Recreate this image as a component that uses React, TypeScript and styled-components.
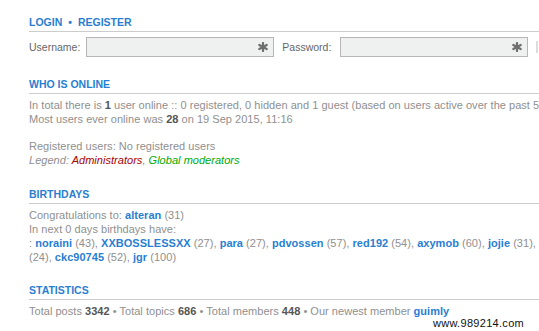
import * as React from 'react'
import styled, { createGlobalStyle } from 'styled-components'

const GlobalStyle = createGlobalStyle`
    html, body {
        margin: 0;
        padding: 0;
        background: #ffffff;
        overflow: hidden;
    }
    body {
        font-family: "Liberation Sans", Arial, sans-serif;
        font-size: 11px;
        color: #8f8f8f;
    }
`

const Page = styled.div`
    position: relative;
    width: 539px;
    height: 331px;
    overflow: hidden;
    padding: 15px 0 0 29px;
    box-sizing: border-box;
`

const Section = styled.section`
    width: 600px;
    margin-bottom: ${(p: { gap?: number }) => p.gap ?? 20}px;
`

const Heading = styled.h3`
    margin: 0;
    padding: 0 0 2px;
    font-size: 10.5px;
    line-height: 14px;
    font-weight: bold;
    text-transform: uppercase;
    color: #2a7ed2;
    border-bottom: 1px solid #cccccc;
`

const HeadLink = styled.a`
    color: inherit;
    text-decoration: none;
`

const Bullet = styled.span`
    margin: 0 6px;
`

const Body = styled.div`
    margin-top: 4px;
`

const Para = styled.p`
    margin: 0 0 13px;
    line-height: 14px;
    white-space: nowrap;
    letter-spacing: 0.03px;

    &:last-child {
        margin-bottom: 0;
    }
`

const Strong = styled.strong`
    color: #555555;
`

const User = styled.a`
    color: #2a7ed2;
    font-weight: bold;
    text-decoration: none;
`

const Group = styled.a`
    color: ${(p: { tint: string }) => p.tint};
    text-decoration: none;
`

const LoginRow = styled.div`
    display: flex;
    align-items: center;
    margin-top: 5px;
    height: 20px;
`

const Label = styled.label`
    font-size: 10.5px;
    color: #666666;
    margin-right: ${(p: { space: number }) => p.space}px;
    white-space: nowrap;
`

const Field = styled.div`
    position: relative;
    flex: none;
    width: 188px;
    height: 20px;
    box-sizing: border-box;
    border: 1px solid #b6b6b6;
    background: #eff0f0;
    margin-right: 8px;

    svg {
        position: absolute;
        right: 5px;
        top: 4px;
    }
`

const Stub = styled.div`
    flex: none;
    width: 20px;
    height: 12px;
    border-left: 2px solid #dddddd;
`

const Watermark = styled.div`
    position: absolute;
    left: 433px;
    top: 317px;
    font-size: 11px;
    color: #111111;
    letter-spacing: 0.3px;
`

const Star = () => (
    <svg width="10" height="10" viewBox="0 0 10 10">
        <g stroke="#6f6f6f" strokeWidth="2.2" strokeLinecap="round">
            <line x1="5" y1="1" x2="5" y2="9" />
            <line x1="1.3" y1="3" x2="8.7" y2="7" />
            <line x1="1.3" y1="7" x2="8.7" y2="3" />
        </g>
    </svg>
)

const birthdays: [string, number][] = [
    ['noraini', 43],
    ['XXBOSSLESSXX', 27],
    ['para', 27],
    ['pdvossen', 57],
    ['red192', 54],
    ['axymob', 60],
    ['jojie', 31],
]

export default function App() {
    return <>
        <GlobalStyle />
        <Page>
            <Section gap={20}>
                <Heading>
                    <HeadLink href="#">Login</HeadLink>
                    <Bullet>•</Bullet>
                    <HeadLink href="#">Register</HeadLink>
                </Heading>
                <LoginRow>
                    <Label space={6}>Username:</Label>
                    <Field><Star /></Field>
                    <Label space={9}>Password:</Label>
                    <Field><Star /></Field>
                    <Stub />
                </LoginRow>
            </Section>

            <Section>
                <Heading>Who is online</Heading>
                <Body>
                    <Para>
                        In total there is <Strong>1</Strong> user online :: 0 registered, 0 hidden and 1 guest (based on users active over the past 5 minutes)<br />
                        Most users ever online was <Strong>28</Strong> on 19 Sep 2015, 11:16
                    </Para>
                    <Para>
                        Registered users: No registered users<br />
                        <em>Legend: <Group tint="#aa0000">Administrators</Group>, <Group tint="#00aa00">Global moderators</Group></em>
                    </Para>
                </Body>
            </Section>

            <Section gap={19}>
                <Heading>Birthdays</Heading>
                <Body>
                    <Para>
                        Congratulations to: <User href="#">alteran</User> (31)<br />
                        In next 0 days birthdays have:<br />
                        : {birthdays.map(([name, age], i) => (
                            <React.Fragment key={name}>
                                <User href="#">{name}</User> ({age}){i < birthdays.length - 1 ? ', ' : ','}
                            </React.Fragment>
                        ))}<br />
                        (24), <User href="#">ckc90745</User> (52), <User href="#">jgr</User> (100)
                    </Para>
                </Body>
            </Section>

            <Section>
                <Heading>Statistics</Heading>
                <Body>
                    <Para>
                        Total posts <Strong>3342</Strong> • Total topics <Strong>686</Strong> • Total members <Strong>448</Strong> • Our newest member <User href="#">guimly</User>
                    </Para>
                </Body>
            </Section>

            <Watermark>www.989214.com</Watermark>
        </Page>
    </>
}
